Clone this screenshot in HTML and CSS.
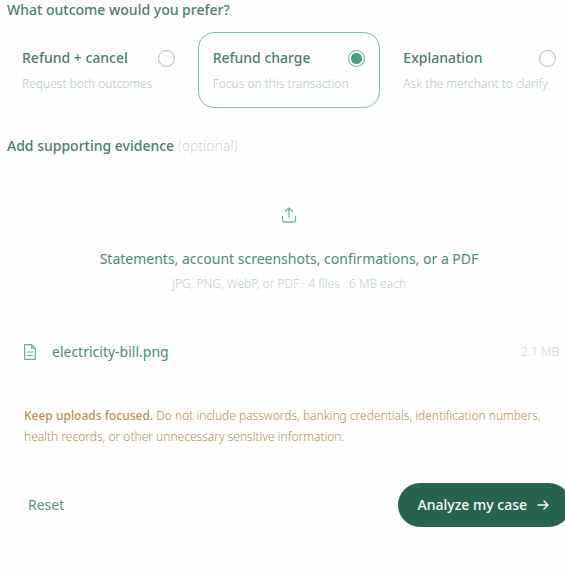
FILE: index.html
```html
<!DOCTYPE html>
<html lang="en">
<head>
<meta charset="utf-8">
<meta name="viewport" content="width=device-width, initial-scale=1">
<title>Analyze my case</title>
<link rel="stylesheet" href="styles.css">
</head>
<body>
<form class="case-form">
  <fieldset class="outcomes">
    <legend class="label">What outcome would you prefer?</legend>
    <div class="choices">
      <label class="choice">
        <span class="choice-title">Refund + cancel</span>
        <input class="radio" type="radio" name="outcome" value="both">
        <span class="choice-hint">Request both outcomes</span>
      </label>
      <label class="choice">
        <span class="choice-title">Refund charge</span>
        <input class="radio" type="radio" name="outcome" value="refund" checked>
        <span class="choice-hint">Focus on this transaction</span>
      </label>
      <label class="choice">
        <span class="choice-title">Explanation</span>
        <input class="radio" type="radio" name="outcome" value="explain">
        <span class="choice-hint">Ask the merchant to clarify</span>
      </label>
    </div>
  </fieldset>

  <h2 class="label evidence">Add supporting evidence <span class="optional">(optional)</span></h2>

  <button class="dropzone" type="button">
    <svg class="upload-icon" viewBox="0 0 16 16" aria-hidden="true"><path d="M8 10.500V1.500M4.500 4.500 8 1l3.500 3.500M1.500 9.500v3.500a2 2 0 0 0 2 2h9a2 2 0 0 0 2-2V9.500"/></svg>
    <span class="drop-title">Statements, account screenshots, confirmations, or a PDF</span>
    <span class="drop-hint">JPG, PNG, WebP, or PDF · 4 files · 6 MB each</span>
  </button>

  <div class="file">
    <svg class="file-icon" viewBox="0 0 12 16" aria-hidden="true"><path d="M.6.6h7l3.800 3.800v11H.6zM7.600.6v3.800h3.800M3 8h6M3 11.500h6"/></svg>
    <span class="file-name">electricity-bill.png</span>
    <span class="file-size">2.1 MB</span>
  </div>

  <p class="notice"><strong>Keep uploads focused.</strong> Do not include passwords, banking credentials, identification numbers, health records, or other unnecessary sensitive information.</p>

  <div class="actions">
    <button class="reset" type="reset">Reset</button>
    <button class="submit" type="submit">Analyze my case
      <svg class="arrow" viewBox="0 0 12 10" aria-hidden="true"><path d="M1 5h10M7 1l4 4-4 4"/></svg>
    </button>
  </div>
</form>
</body>
</html>
```
FILE: styles.css
```css
* { box-sizing: border-box; }

body {
  margin: 0;
  overflow-x: hidden;
  background: #fefefe;
  color: #4b806a;
  font: 14px/20px "Segoe UI", "Noto Sans", "Open Sans", sans-serif;
}

button { font: inherit; border: 0; background: none; }

.case-form { margin: 0 -6px 0 7px; }

.outcomes { margin: 0; padding: 0; border: 0; min-width: 0; }
.label { margin: 0; padding: 0; font-size: 14px; font-weight: 500; }

.choices {
  display: grid;
  grid-template-columns: repeat(3, 1fr);
  gap: 8px;
  margin-top: 12px;
}
.choice {
  display: grid;
  grid-template-columns: 1fr auto;
  align-items: center;
  row-gap: 6px;
  padding: 15px 14px 13px;
  border: 1px solid transparent;
  border-radius: 16px;
}
.choice:has(:checked) { border-color: #83bea6; }
.choice-title { font-weight: 500; }
.choice-hint {
  grid-column: 1 / -1;
  color: #b3cac2;
  font-size: 12px;
  font-weight: 300;
  white-space: nowrap;
}

.radio {
  appearance: none;
  width: 17px;
  height: 17px;
  margin: 0;
  border: 1px solid #b5b9b7;
  border-radius: 50%;
}
.radio:checked {
  border-color: #5faa8b;
  background: radial-gradient(circle, #469e7c 5px, transparent 6px);
}

.evidence { margin-top: 28px; }
.optional { color: #c8dad3; font-weight: 300; }

.dropzone {
  display: flex;
  flex-direction: column;
  align-items: center;
  width: 100%;
  margin-top: 24px;
  padding: 27px 0;
  color: #5f9d84;
}
.upload-icon, .file-icon, .arrow {
  fill: none;
  stroke: currentColor;
  stroke-linecap: round;
  stroke-linejoin: round;
}
.upload-icon { width: 16px; height: 16px; color: #72b79b; stroke-width: 1.3; }
.drop-title { margin-top: 26px; color: #4f8b72; }
.drop-hint { margin-top: 5px; color: #bdd2cb; font-size: 12px; font-weight: 300; }

.file {
  display: flex;
  align-items: center;
  margin-top: 21px;
  padding: 0 12px 0 17px;
}
.file-icon { width: 12px; height: 16px; color: #72b096; stroke-width: 1.2; }
.file-name { margin-left: 16px; color: #4f8b72; }
.file-size { margin-left: auto; color: #c1d9d3; font-size: 12px; font-weight: 300; }

.notice {
  margin: 43px 28px 0 17px;
  color: #b58e50;
  font-size: 12px;
  font-weight: 300;
  line-height: 21px;
}
.notice strong { color: #b9924f; font-weight: 500; }

.actions {
  display: flex;
  align-items: center;
  justify-content: space-between;
  margin-top: 36px;
}
.reset { padding: 12px 21px; color: #5f927d; }
.submit {
  display: flex;
  align-items: center;
  gap: 10px;
  padding: 12px 22px 12px 20px;
  border-radius: 24px;
  background: #286350;
  color: #f7fbf9;
  font-weight: 500;
}
.arrow { width: 12px; height: 10px; stroke-width: 1.5; }
```
